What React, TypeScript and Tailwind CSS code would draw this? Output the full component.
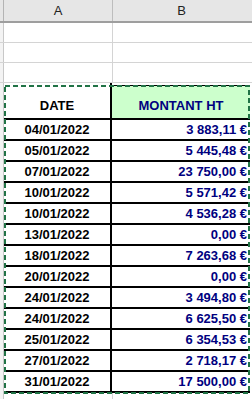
import React from 'react'

type Row = {
	date: string
	amount: string
}

const rows: Row[] = [
	{ date: '04/01/2022', amount: '3 883,11 €' },
	{ date: '05/01/2022', amount: '5 445,48 €' },
	{ date: '07/01/2022', amount: '23 750,00 €' },
	{ date: '10/01/2022', amount: '5 571,42 €' },
	{ date: '10/01/2022', amount: '4 536,28 €' },
	{ date: '13/01/2022', amount: '0,00 €' },
	{ date: '18/01/2022', amount: '7 263,68 €' },
	{ date: '20/01/2022', amount: '0,00 €' },
	{ date: '24/01/2022', amount: '3 494,80 €' },
	{ date: '24/01/2022', amount: '6 625,50 €' },
	{ date: '25/01/2022', amount: '6 354,53 €' },
	{ date: '27/01/2022', amount: '2 718,17 €' },
	{ date: '31/01/2022', amount: '17 500,00 €' },
]

const EmptyRow = () => (
	<div className="flex h-[20px] border-b border-[#d4d4d4]">
		<div className="w-[4px] shrink-0 border-r border-[#c8c8c8] bg-[#f3f3f3]" />
		<div className="w-[109px] shrink-0 border-r border-[#d4d4d4]" />
		<div className="flex-1" />
	</div>
)

const App = () => {
	return (
		<div
			className="relative w-[252px] h-[399px] overflow-hidden bg-white"
			style={{ fontFamily: '"Liberation Sans", Arial, sans-serif' }}
		>
			{/* column letters */}
			<div className="flex h-[23px] bg-[#e6e6e6] border-b-2 border-[#9e9e9e] text-[13px] text-[#222]">
				<div className="w-[4px] shrink-0 border-r border-[#b4b4b4]" />
				<div className="w-[109px] shrink-0 border-r border-[#bdbdbd] flex items-center justify-center">
					A
				</div>
				<div className="flex-1 flex items-center justify-center pr-[2px]">B</div>
			</div>

			<div className="h-[20px] border-b border-[#d4d4d4] flex">
				<div className="w-[4px] shrink-0 border-r border-[#c8c8c8] bg-[#f3f3f3]" />
				<div className="w-[109px] shrink-0 border-r border-[#d4d4d4]" />
			</div>
			<EmptyRow />
			<EmptyRow />

			{/* table */}
			<div className="flex">
				<div className="w-[4px] shrink-0 border-r border-[#c8c8c8] bg-[#f3f3f3]" />
				<div className="w-[246px] shrink-0 text-[13px] font-bold">
					<div className="flex h-[37px] border-b-2 border-black">
						<div className="w-[108px] shrink-0 border-r-2 border-black flex items-end justify-center pb-[3px] text-black">
							DATE
						</div>
						<div className="flex-1 mt-[2px] bg-[#ccffcc] border-t border-black flex items-end justify-center pb-[3px] text-[#000080]">
							MONTANT HT
						</div>
					</div>
					{rows.map((row, i) => (
						<div key={i} className="flex h-[21px] border-b-2 border-black">
							<div className="w-[108px] shrink-0 border-r-2 border-black flex items-center justify-center text-black">
								{row.date}
							</div>
							<div className="flex-1 flex items-center justify-end pr-[3px] text-[#000080]">
								{row.amount}
							</div>
						</div>
					))}
				</div>
			</div>
			<div className="flex h-[10px]">
				<div className="w-[4px] shrink-0 border-r border-[#c8c8c8] bg-[#f3f3f3]" />
				<div className="w-[109px] shrink-0 border-r border-[#d4d4d4]" />
			</div>

			{/* copy selection marquee */}
			<svg className="absolute left-0 top-0 pointer-events-none" width="252" height="399">
				<rect
					x="5"
					y="86"
					width="244"
					height="307"
					fill="none"
					stroke="#217346"
					strokeWidth="2"
					strokeDasharray="5 3"
				/>
			</svg>
		</div>
	)
}

export default App
